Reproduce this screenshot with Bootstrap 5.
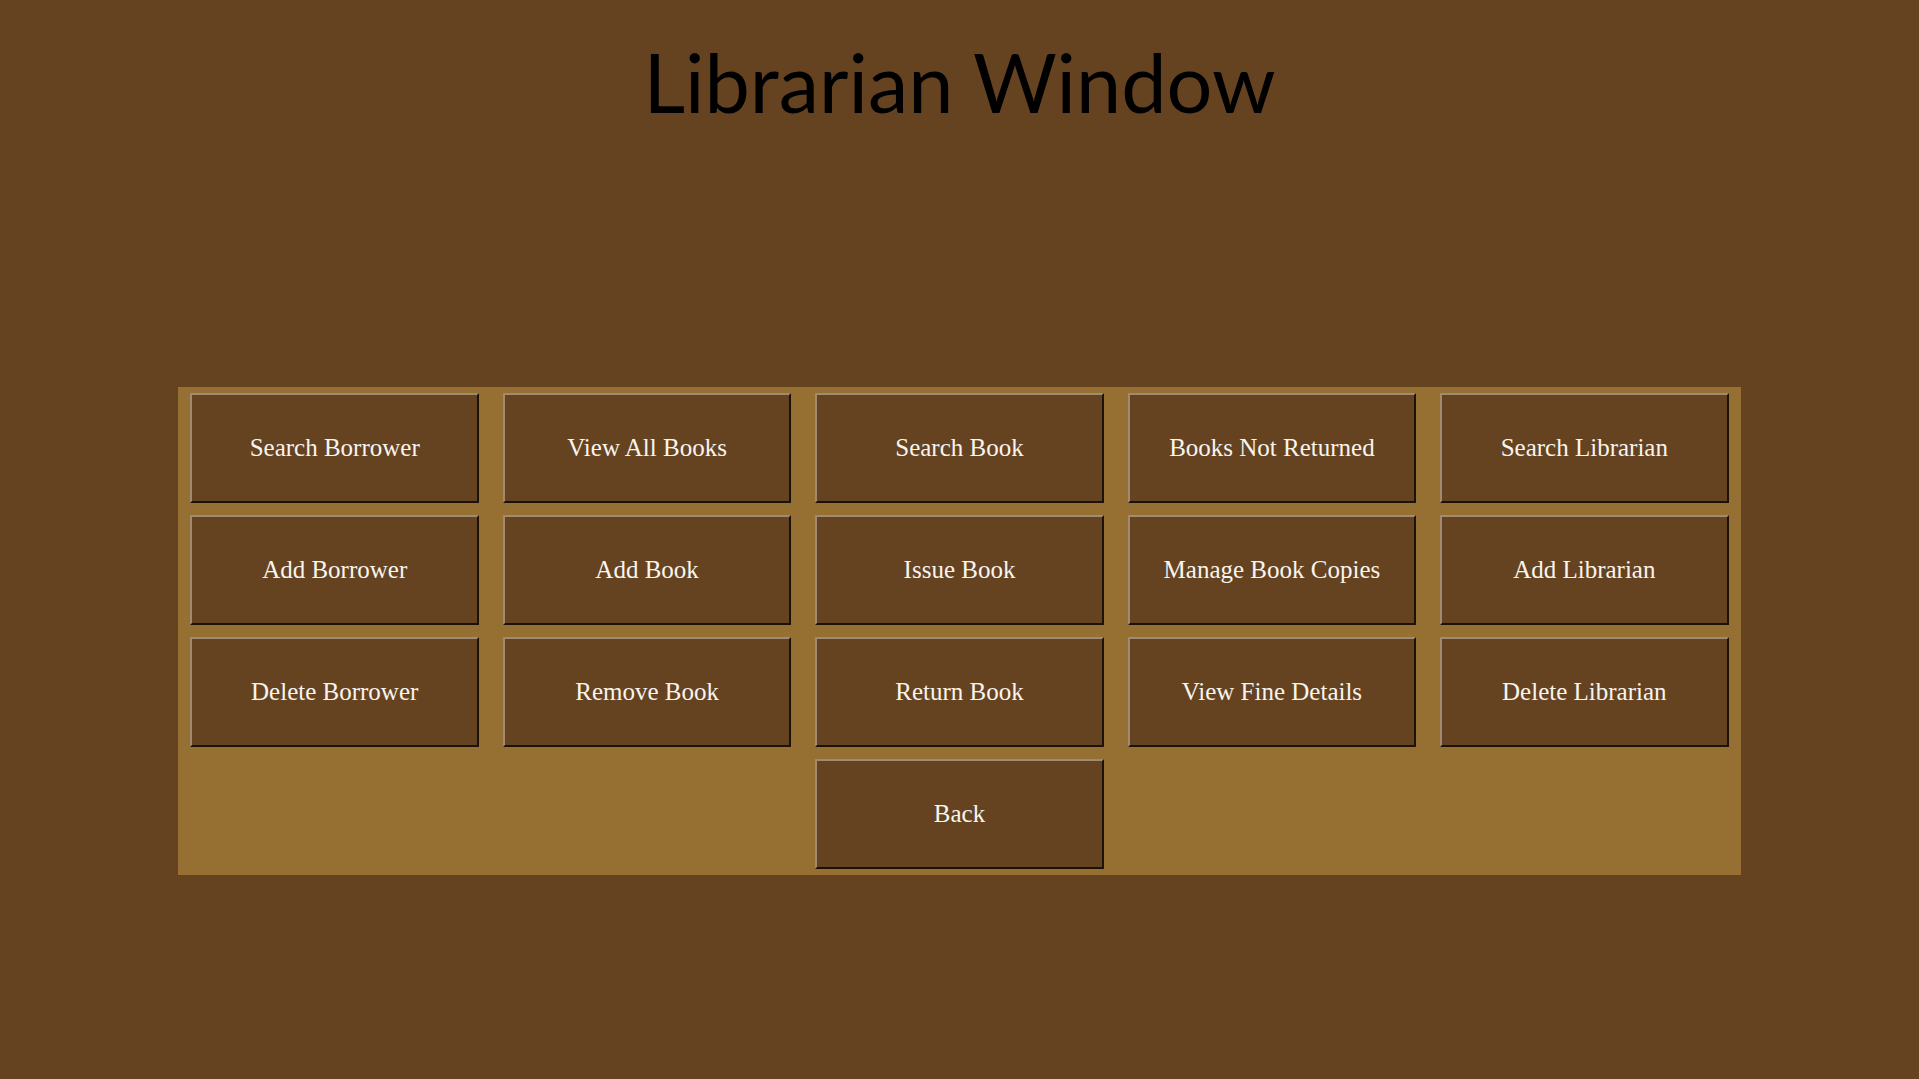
<!DOCTYPE html>
<html lang="en">
<head>
<meta charset="utf-8">
<meta name="viewport" content="width=device-width, initial-scale=1">
<title>Librarian Window</title>
<link href="https://cdn.jsdelivr.net/npm/bootstrap@5.3.0/dist/css/bootstrap.min.css" rel="stylesheet">
<style>
  body { background: #654321; }
  .window-title {
    font-family: Papyrus, Lato, sans-serif;
    font-size: 81px;
    line-height: 88px;
    color: #000;
    padding-top: 38px;
  }
  .window-head { height: 387px; }
  .menu-panel { width: 81.4%; background: #966f33; }
  .menu-cell { padding: 6px 12px; }
  .menu-btn {
    height: 110px;
    font-family: Gabriola, "Liberation Serif", serif;
    font-size: 25px;
    line-height: 32px;
    color: #f8f4ee;
    background: #654321;
    border: 2px solid;
    border-color: #a18a74 #1c1208 #1c1208 #a18a74;
  }
  .menu-btn:hover, .menu-btn:active { color: #fff; background: #70502c; }
</style>
<script src="https://cdn.jsdelivr.net/npm/bootstrap@5.3.0/dist/js/bootstrap.bundle.min.js" defer></script>
</head>
<body>
<header class="window-head">
  <h1 class="window-title text-center fw-normal m-0">Librarian Window</h1>
</header>
<main class="menu-panel mx-auto">
  <div class="row row-cols-5 g-0 justify-content-center">
    <div class="col menu-cell"><button type="button" class="menu-btn w-100">Search Borrower</button></div>
    <div class="col menu-cell"><button type="button" class="menu-btn w-100">View All Books</button></div>
    <div class="col menu-cell"><button type="button" class="menu-btn w-100">Search Book</button></div>
    <div class="col menu-cell"><button type="button" class="menu-btn w-100">Books Not Returned</button></div>
    <div class="col menu-cell"><button type="button" class="menu-btn w-100">Search Librarian</button></div>
    <div class="col menu-cell"><button type="button" class="menu-btn w-100">Add Borrower</button></div>
    <div class="col menu-cell"><button type="button" class="menu-btn w-100">Add Book</button></div>
    <div class="col menu-cell"><button type="button" class="menu-btn w-100">Issue Book</button></div>
    <div class="col menu-cell"><button type="button" class="menu-btn w-100">Manage Book Copies</button></div>
    <div class="col menu-cell"><button type="button" class="menu-btn w-100">Add Librarian</button></div>
    <div class="col menu-cell"><button type="button" class="menu-btn w-100">Delete Borrower</button></div>
    <div class="col menu-cell"><button type="button" class="menu-btn w-100">Remove Book</button></div>
    <div class="col menu-cell"><button type="button" class="menu-btn w-100">Return Book</button></div>
    <div class="col menu-cell"><button type="button" class="menu-btn w-100">View Fine Details</button></div>
    <div class="col menu-cell"><button type="button" class="menu-btn w-100">Delete Librarian</button></div>
    <div class="col menu-cell"><button type="button" class="menu-btn w-100">Back</button></div>
  </div>
</main>
</body>
</html>
